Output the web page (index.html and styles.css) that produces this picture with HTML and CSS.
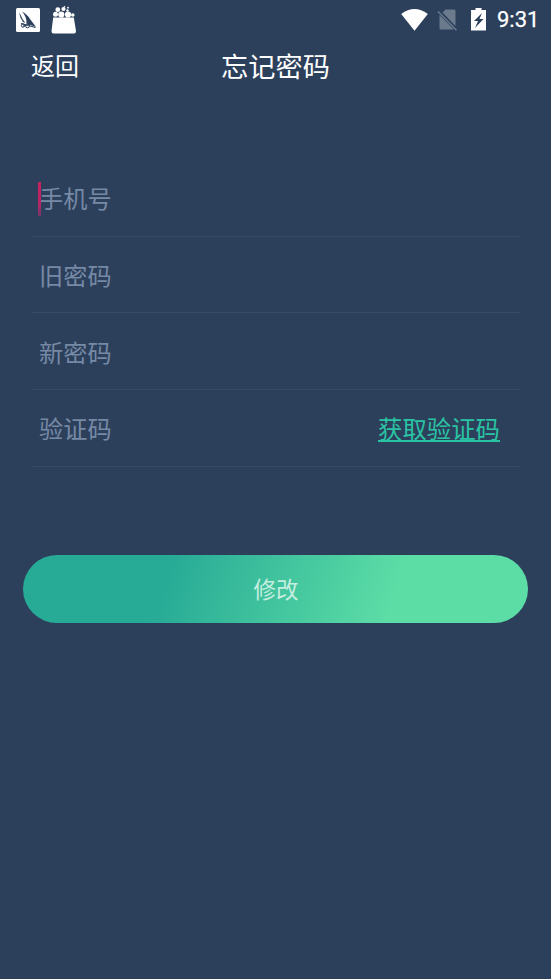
FILE: index.html
```html
<!DOCTYPE html>
<html lang="zh-CN">
<head>
<meta charset="utf-8">
<title>忘记密码</title>
<link rel="stylesheet" href="styles.css">
</head>
<body>
<div class="status">
  <svg class="app-icon" width="24" height="24" viewBox="0 0 24 24"><rect width="24" height="24" rx="1.500" fill="#fff"/><path d="M3 4.500Q5 7 6.500 11L9.500 15L7 14Q4 10 3 4.500ZM6 3.500Q12 7 14 11L20 19L16 17.500L10.500 15.500Q11 9 6 3.500Z" fill="#2c405c"/><path d="M5 15.500L19.500 19.500M7 18L14 16" stroke="#2c405c" stroke-width="1.200"/><circle cx="7" cy="17.500" r="1.700" fill="none" stroke="#2c405c"/><circle cx="11.500" cy="17.800" r="2" fill="none" stroke="#2c405c"/></svg>
  <svg class="bag-icon" width="26" height="28" viewBox="0 0 26 28"><path d="M2.200 11.500H22.800L25 25Q25 27.500 23 27.500H2.500Q.5 27.500 .5 25Z" fill="#fff"/><g fill="#fff"><circle cx="4.500" cy="8.200" r="2.500"/><circle cx="10.300" cy="8.500" r="3.100"/><circle cx="17" cy="8.500" r="3.100"/><circle cx="21.800" cy="9" r="1.800"/><circle cx="6.800" cy="3.700" r="2.400"/><circle cx="12.500" cy="3" r="2.100"/><circle cx="16.500" cy="4.500" r="1.200"/><circle cx="13.500" cy=".8" r=".8"/><circle cx="17" cy="1.700" r=".9"/></g></svg>
  <span class="spacer"></span>
  <svg class="wifi" width="27" height="22" viewBox="0 0 27 22"><path d="M.2 4.900Q13.500-4.900 26.800 4.900L13.500 21.700Z" fill="#fff"/></svg>
  <svg class="sim" width="21" height="22" viewBox="0 0 21 22"><path d="M8.500.5H17Q18.500.5 18.500 2V17L5.500 3.500ZM2.500 6L17 20.500H4Q2.500 20.500 2.500 19Z" fill="#6b7a8d"/><path d="M1 2.500L19.500 21.200" stroke="#6b7a8d" stroke-width="1.500"/></svg>
  <svg class="battery" width="15" height="23" viewBox="0 0 15 23"><path d="M4.500 0H10.500V2H15V22.500H0V2H4.500Z" fill="#fff"/><path d="M11 5L3 13H7L4 20L12.500 11H8.500Z" fill="#2c405c"/></svg>
  <span class="time">9:31</span>
</div>
<header class="nav"><a class="back">返回</a><h1 class="title">忘记密码</h1></header>
<form class="form">
  <div class="field"><span class="caret"></span><span class="hint">手机号</span></div>
  <div class="field"><span class="hint">旧密码</span></div>
  <div class="field"><span class="hint">新密码</span></div>
  <div class="field"><span class="hint">验证码</span><a class="code">获取验证码</a></div>
</form>
<button class="submit">修改</button>
</body>
</html>
```
FILE: styles.css
```css
* { box-sizing: border-box; }
body { margin: 0; height: 979px; overflow: hidden; background: #2c405c; color: #fff; font-family: "Noto Sans CJK SC", sans-serif; }
svg { display: block; flex: none; }
.status { display: flex; height: 39px; padding: 0 13px 0 16px; align-items: center; }
.bag-icon { margin-left: 11px; }
.spacer { flex: 1; }
.sim { margin-left: 9px; }
.battery { margin-left: 13px; }
.time { margin-left: 11px; font: 400 22px/39px Roboto, sans-serif; width: 41px; white-space: nowrap; -webkit-text-stroke: .25px #fff; }
.nav { display: grid; grid-template-columns: 1fr auto 1fr; height: 52px; padding: 0 31px; align-items: center; }
.back { font-size: 24px; line-height: 52px; }
.title { margin: 0; font-size: 27.200px; font-weight: 400; line-height: 52px; }
.form { margin: 69px 31px 0; }
.field { position: relative; display: flex; justify-content: space-between; align-items: center; height: 76.700px; padding: 1px 21px 0 8px; border-bottom: 1px solid #364b66; font-size: 24.200px; line-height: 36px; color: #7689a5; }
.caret { position: absolute; left: 7px; top: 22px; width: 3px; height: 34px; background: linear-gradient(#c9205f, #b52765 65%, #75366a); }
.code { position: relative; left: 1px; color: #2ac4a4; font-size: 24.400px; text-decoration: underline; text-decoration-thickness: 1.500px; text-underline-offset: 2px; }
.submit { display: block; width: 505px; height: 68px; margin: 88px auto 0; padding: 0 0 2px 1px; border: 0; border-radius: 34px; background: linear-gradient(108deg, #27aa96 28%, #5cdda6 73%); color: #c4eedf; font-family: inherit; font-size: 22.500px; line-height: 66px; }
```
